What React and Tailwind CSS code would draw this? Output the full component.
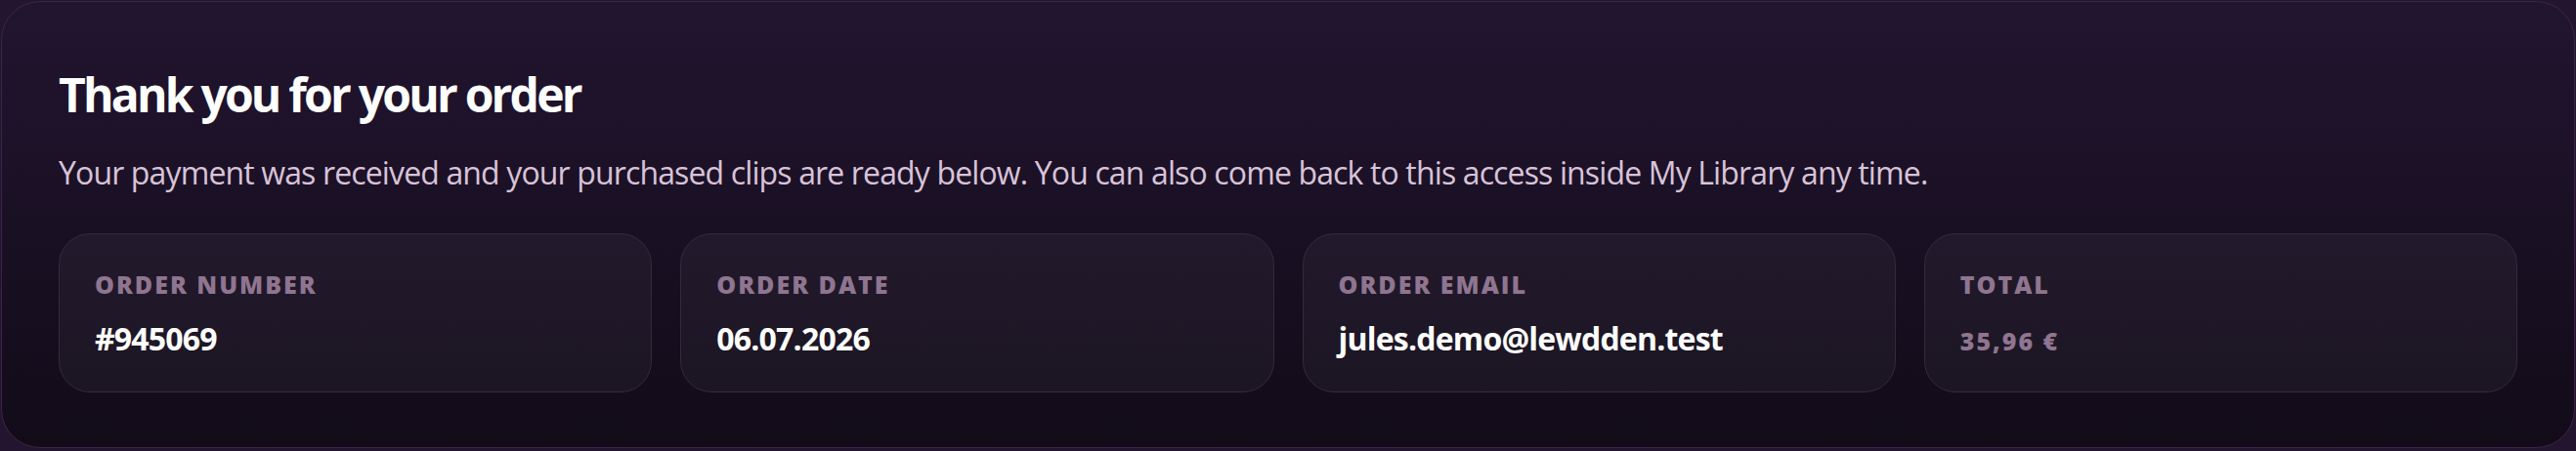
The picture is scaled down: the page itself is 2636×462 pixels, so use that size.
const FONT = { fontFamily: '"Open Sans", "Noto Sans", sans-serif' };

const ITEMS = [
  { label: "Order number", value: "#945069" },
  { label: "Order date", value: "06.07.2026" },
  { label: "Order email", value: "jules.demo@lewdden.test" },
  { label: "Total", value: "35,96 €", muted: true },
];

function InfoCard({ label, value, muted }) {
  return (
    <div className="rounded-[32px] border border-[#342a3d] bg-gradient-to-b from-[#221a2c] to-[#1c1523] px-[36px] pt-[35px] pb-[34px]">
      <p className="text-[25px] leading-[32px] font-extrabold uppercase tracking-[0.08em] text-[#8f7590]">{label}</p>
      {muted ? (
        <p className="mt-[20px] h-[40px] pt-[2px] text-[25px] leading-[40px] font-extrabold tracking-[0.08em] text-[#8f7590]">{value}</p>
      ) : (
        <p className="mt-[20px] text-[32px] leading-[40px] font-bold tracking-[-0.025em] text-white">{value}</p>
      )}
    </div>
  );
}

export default function App() {
  return (
    <div className="min-h-[462px] bg-[#231530] p-[1px]" style={FONT}>
      <div className="rounded-[40px] border border-[#3a2546] bg-gradient-to-b from-[#221530] to-[#120b18] px-[58px] pt-[67px] pb-[56px]">
        <h1 className="text-[48px] leading-[56px] font-bold tracking-[-0.058em] text-white">Thank you for your order</h1>
        <p className="mt-[32px] text-[32px] leading-[40px] tracking-[-0.027em] text-[#d8c3d8]">
          Your payment was received and your purchased clips are ready below. You can also come back to this access inside My Library any time.
        </p>
        <div className="mt-[42px] grid grid-cols-4 gap-[29px]">
          {ITEMS.map((it) => (
            <InfoCard key={it.label} {...it} />
          ))}
        </div>
      </div>
    </div>
  );
}
